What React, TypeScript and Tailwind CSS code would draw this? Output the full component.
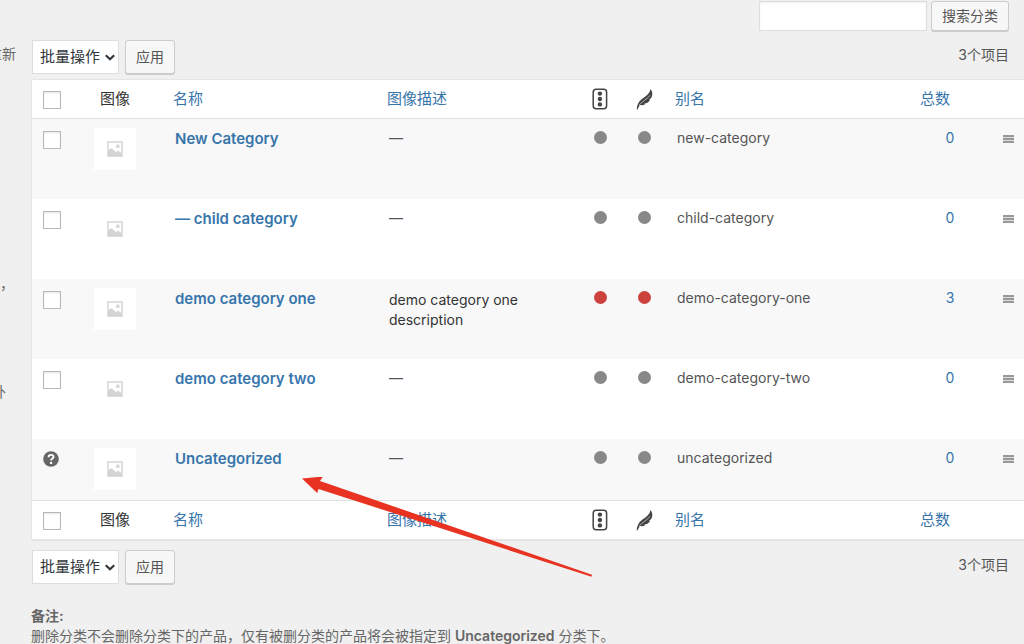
import { useState } from "react";

type Tone = "grey" | "red";

type Category = {
  name: string;
  slug: string;
  count: number;
  tone: Tone;
  description?: string;
  isDefault?: boolean;
};

const CATEGORIES: Category[] = [
  { name: "New Category", slug: "new-category", count: 0, tone: "grey" },
  { name: "— child category", slug: "child-category", count: 0, tone: "grey" },
  {
    name: "demo category one",
    slug: "demo-category-one",
    count: 3,
    tone: "red",
    description: "demo category one description",
  },
  { name: "demo category two", slug: "demo-category-two", count: 0, tone: "grey" },
  { name: "Uncategorized", slug: "uncategorized", count: 0, tone: "grey", isDefault: true },
];

const TONE_CLASS: Record<Tone, string> = {
  grey: "bg-[#888888]",
  red: "bg-[#cc423d]",
};

const BUTTON_CLASS =
  "rounded-[3px] border border-[#cccccc] bg-[#f7f7f7] text-sm text-[#555555] shadow-[0_1px_0_#cccccc]";

function Checkbox({ label }: { label: string }) {
  return (
    <input
      type="checkbox"
      aria-label={label}
      className="block size-[18px] appearance-none border border-[#b4b9be] bg-white shadow-[inset_0_1px_2px_rgba(0,0,0,0.1)] checked:bg-[#3775ab]"
    />
  );
}

function SeoIcon() {
  return (
    <svg viewBox="0 0 16 22" className="mx-auto h-[22px] w-4" fill="#444">
      <rect x="1.2" y="1.2" width="13.4" height="19.6" rx="3" fill="none" stroke="#444" strokeWidth="1.5" />
      <circle cx="7.9" cy="5.6" r="2.2" />
      <circle cx="7.9" cy="11" r="2.2" />
      <circle cx="7.9" cy="16.4" r="2.2" />
    </svg>
  );
}

function FeatherIcon() {
  return (
    <svg viewBox="0 0 18 22" className="mx-auto h-[22px] w-[18px]">
      <path
        d="M14.4 1C16.500 3.400 16.800 6 15.800 8.800C15.200 10.300 14.300 11.200 13 11.800L14 12.200C12.600 14.200 10.600 15.400 8.200 15.700L9.200 16.200C7.400 17.100 5.600 17.300 3.800 17L1.400 21.500L.7 21.200C1 18 1.900 15.400 3.500 13.300C5.300 10.900 8.200 9.500 10.600 7.500C12.700 5.700 14.200 3.700 14.400 1Z"
        fill="#444"
      />
      <path d="M3 17.200C6 13.600 10.600 11.300 14.200 7.400" fill="none" stroke="#fff" strokeWidth=".6" />
    </svg>
  );
}

function PlaceholderThumb() {
  return (
    <div className="mx-auto flex size-[42px] items-center justify-center bg-white">
      <svg viewBox="0 0 16 16" className="size-4">
        <rect x="1" y="1" width="14" height="14" fill="#fff" stroke="#d6d8da" strokeWidth="1.6" />
        <circle cx="10.800" cy="5.200" r="1.900" fill="#d6d8da" />
        <path d="M1 9.500L4.500 7L9 11.200L11 9.600L15 12.500V15.200H1Z" fill="#d2d4d6" />
      </svg>
    </div>
  );
}

function HelpIcon() {
  return (
    <svg viewBox="0 0 16 16" className="size-4" role="img" aria-label="Default category">
      <circle cx="8" cy="8" r="7.800" fill="#666" />
      <path
        d="M5.600 6.200C5.600 4.700 6.600 3.900 8 3.900C9.500 3.900 10.500 4.700 10.500 5.900C10.500 7.500 8.100 7.600 8.100 9.400"
        fill="none"
        stroke="#fff"
        strokeWidth="1.900"
      />
      <circle cx="8.100" cy="11.900" r="1.200" fill="#fff" />
    </svg>
  );
}

function DragHandle() {
  return (
    <svg viewBox="0 0 11 8" className="h-2 w-[11px]">
      <path d="M0 0H11V8H0Z" fill="#dcdcdc" />
      <path d="M0 0H11V2H0ZM0 3H11V5H0ZM0 6H11V8H0Z" fill="#999" />
    </svg>
  );
}

function Dot({ tone }: { tone: Tone }) {
  return <span className={`mx-auto block size-[13px] rounded-full ${TONE_CLASS[tone]}`} />;
}

function HeadingRow({ label }: { label: string }) {
  return (
    <tr className="h-[39px] bg-white text-left text-[15px] leading-5 text-[#333333]">
      <td className="pt-0.5 pl-[11px]">
        <Checkbox label={label} />
      </td>
      <th className="pr-2 text-center font-normal">图像</th>
      <th className="pl-2 font-normal">
        <a href="#name" className="text-[#3775ab]">名称</a>
      </th>
      <th className="pl-2 font-normal">
        <a href="#description" className="text-[#3775ab]">图像描述</a>
      </th>
      <th aria-label="SEO">
        <SeoIcon />
      </th>
      <th aria-label="Readability">
        <FeatherIcon />
      </th>
      <th className="pl-2 font-normal">
        <a href="#slug" className="text-[#3775ab]">别名</a>
      </th>
      <th className="pl-2 font-normal">
        <a href="#count" className="text-[#3775ab]">总数</a>
      </th>
      <td />
    </tr>
  );
}

function CategoryRow({ category }: { category: Category }) {
  const { name, slug, count, tone, description, isDefault } = category;

  return (
    <tr className="h-20 align-top text-sm leading-5 text-[#555555] odd:bg-[#f8f8f8] last:h-[61px] even:bg-white">
      <td className="pt-3 pl-[11px]">{isDefault ? <HelpIcon /> : <Checkbox label={name} />}</td>
      <td className="pt-[9px] pr-2">
        <PlaceholderThumb />
      </td>
      <td className="pt-2.5 pl-2.5">
        <a href="#edit" className="block text-[15px] font-semibold text-[#3775ab]">{name}</a>
      </td>
      {description ? (
        <td className="pt-[11px] pr-4 pl-2.5 text-[#333333]">{description}</td>
      ) : (
        <td className="pt-[9px] pl-2.5">—</td>
      )}
      <td className="pt-3">
        <Dot tone={tone} />
      </td>
      <td className="pt-3">
        <Dot tone={tone} />
      </td>
      <td className="pt-[9px] pl-2.5">{slug}</td>
      <td className="pt-[9px] text-center">
        <a href="#posts" className="text-[#3775ab]">{count}</a>
      </td>
      <td className="pt-4 pl-[15px]">
        <DragHandle />
      </td>
    </tr>
  );
}

function TableNav() {
  const [action, setAction] = useState("-1");

  return (
    <div className="flex items-start justify-between pr-[15px] pl-px">
      <div className="flex gap-1.5">
        <div className="relative">
          <select
            aria-label="选择批量操作"
            value={action}
            onChange={(e) => setAction(e.target.value)}
            className="h-[34px] w-[87px] appearance-none border border-[#dddddd] bg-white pl-[7px] text-[15px] text-[#32373c]"
          >
            <option value="-1">批量操作</option>
            <option value="delete">删除</option>
          </select>
          <svg
            viewBox="0 0 10 7"
            className="pointer-events-none absolute top-3.5 right-1 h-[7px] w-2.5"
            fill="none"
            stroke="#32373c"
            strokeWidth="2.2"
          >
            <path d="M.8 1.200L5 5.200L9.200 1.200" />
          </svg>
        </div>
        <button type="button" className={`h-[34px] w-[50px] ${BUTTON_CLASS}`}>应用</button>
      </div>
      <span className="pt-[5px] text-sm leading-5 text-[#555555]">3个项目</span>
    </div>
  );
}

// tail end of the "add category" column, scrolled out to the left
function FormColumn() {
  return (
    <div className="relative w-[31px] shrink-0 overflow-hidden text-sm leading-5 text-[#666666]">
      <span className="absolute top-11 right-[15px] whitespace-nowrap">重新</span>
      <span className="absolute top-[274px] right-[17px] whitespace-nowrap">，</span>
      <span className="absolute top-[382px] right-[25px] whitespace-nowrap">外</span>
    </div>
  );
}

export default function App() {
  return (
    <div className="flex min-h-screen overflow-hidden bg-[#f0f0f0] font-['Inter','Noto_Sans_CJK_SC',sans-serif]">
      <FormColumn />

      <main className="relative min-w-0 flex-1">
        <form className="flex justify-end gap-1 pt-px pr-[15px]" onSubmit={(e) => e.preventDefault()}>
          <input
            type="search"
            aria-label="搜索分类"
            className="h-[30px] w-[168px] border border-[#dddddd] bg-white px-2 text-sm shadow-[inset_0_1px_2px_rgba(0,0,0,0.07)]"
          />
          <button type="submit" className={`h-[30px] w-[78px] ${BUTTON_CLASS}`}>搜索分类</button>
        </form>

        <div className="mt-[9px]">
          <TableNav />
        </div>

        <table className="mt-[5px] w-full table-fixed border-separate border-spacing-0 border border-r-0 border-[#e5e5e5] shadow-[0_1px_1px_rgba(0,0,0,0.04)] [&_tfoot_td]:border-t [&_tfoot_td]:border-[#e1e1e1] [&_tfoot_th]:border-t [&_tfoot_th]:border-[#e1e1e1] [&_thead_td]:border-b [&_thead_td]:border-[#e1e1e1] [&_thead_th]:border-b [&_thead_th]:border-[#e1e1e1]">
          <colgroup>
            <col className="w-[41px]" />
            <col className="w-[92px]" />
            <col className="w-[214px]" />
            <col className="w-[199px]" />
            <col className="w-11" />
            <col className="w-[45px]" />
            <col />
            <col className="w-[76px]" />
            <col className="w-9" />
          </colgroup>
          <thead>
            <HeadingRow label="全选" />
          </thead>
          <tbody>
            {CATEGORIES.map((category) => (
              <CategoryRow key={category.slug} category={category} />
            ))}
          </tbody>
          <tfoot>
            <HeadingRow label="全选" />
          </tfoot>
        </table>

        <div className="mt-2.5">
          <TableNav />
        </div>

        <div className="mt-[22px] text-sm leading-5 text-[#666666]">
          <strong className="block font-bold">备注:</strong>
          <p>
            删除分类不会删除分类下的产品，仅有被删分类的产品将会被指定到 <strong className="font-semibold">Uncategorized</strong> 分类下。
          </p>
        </div>

        {/* arrow pointing at the default category */}
        <svg viewBox="0 0 290 100" className="pointer-events-none absolute top-[477px] left-[271px] h-[100px] w-[290px]" fill="#e83323">
          <path d="M0 1.500L21 -.5L18 4L290 97.800L289.500 99.800L16.500 12L15.200 16Z" />
        </svg>
      </main>
    </div>
  );
}
